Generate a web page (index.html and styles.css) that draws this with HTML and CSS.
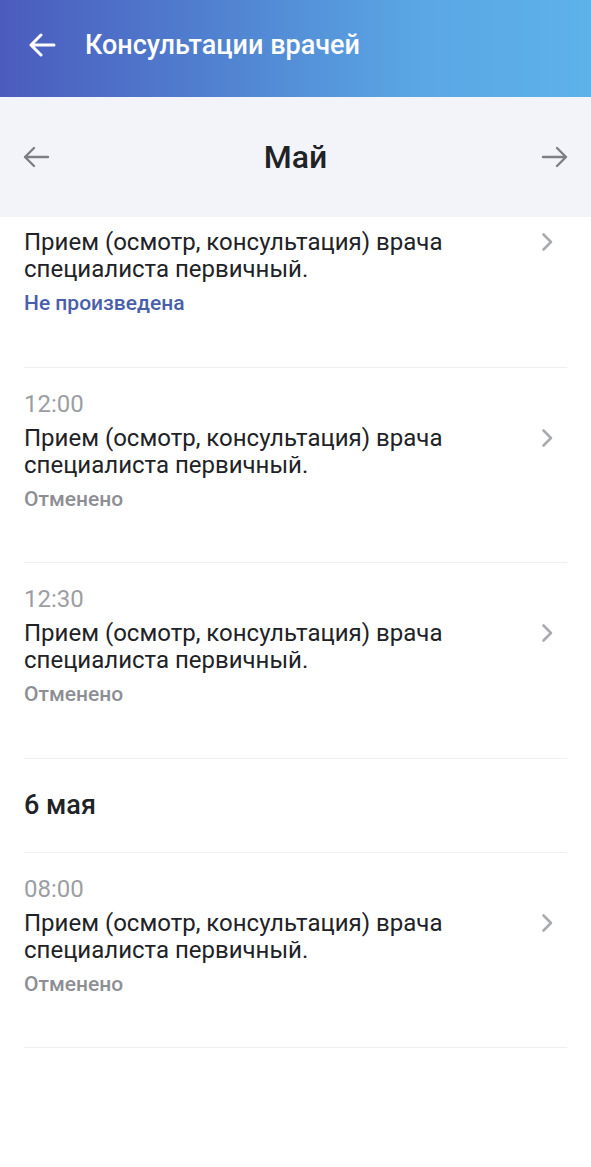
FILE: index.html
```html
<!DOCTYPE html>
<html lang="ru">
<head>
<meta charset="utf-8">
<link rel="stylesheet" href="styles.css">
</head>
<body>
<header class="appbar">
  <svg class="appbar-back" width="28" height="24" viewBox="0 0 28 24"><path d="M26 12H3M13 2L3 12l10 10" fill="none" stroke="#fff" stroke-width="3" stroke-linecap="round" stroke-linejoin="round"/></svg>
  <h1 class="appbar-title">Консультации врачей</h1>
</header>
<nav class="month">
  <svg class="month-arrow" width="28" height="22" viewBox="0 0 28 22"><path d="M26 11H3M12 2L3 11l9 9" fill="none" stroke="#7c7f86" stroke-width="2.4" stroke-linecap="round" stroke-linejoin="round"/></svg>
  <div class="month-name">Май</div>
  <svg class="month-arrow" width="28" height="22" viewBox="0 0 28 22"><path d="M2 11h23M16 2l9 9-9 9" fill="none" stroke="#7c7f86" stroke-width="2.4" stroke-linecap="round" stroke-linejoin="round"/></svg>
</nav>
<main class="list">
  <div class="item item-clipped">
    <div class="item-body">
      <div class="item-title">Прием (осмотр, консультация) врача специалиста первичный.</div>
      <div class="item-status status-blue">Не произведена</div>
    </div>
    <svg class="chev" width="12" height="20" viewBox="0 0 12 20"><path d="M2.5 2.5l7.5 7.5-7.5 7.5" fill="none" stroke="#a9abb0" stroke-width="2.6" stroke-linecap="round" stroke-linejoin="round"/></svg>
  </div>
  <div class="item">
    <div class="item-body">
      <div class="item-time">12:00</div>
      <div class="item-title">Прием (осмотр, консультация) врача специалиста первичный.</div>
      <div class="item-status">Отменено</div>
    </div>
    <svg class="chev" width="12" height="20" viewBox="0 0 12 20"><path d="M2.5 2.5l7.5 7.5-7.5 7.5" fill="none" stroke="#a9abb0" stroke-width="2.6" stroke-linecap="round" stroke-linejoin="round"/></svg>
  </div>
  <div class="item">
    <div class="item-body">
      <div class="item-time">12:30</div>
      <div class="item-title">Прием (осмотр, консультация) врача специалиста первичный.</div>
      <div class="item-status">Отменено</div>
    </div>
    <svg class="chev" width="12" height="20" viewBox="0 0 12 20"><path d="M2.5 2.5l7.5 7.5-7.5 7.5" fill="none" stroke="#a9abb0" stroke-width="2.6" stroke-linecap="round" stroke-linejoin="round"/></svg>
  </div>
  <div class="day">6 мая</div>
  <div class="item">
    <div class="item-body">
      <div class="item-time">08:00</div>
      <div class="item-title">Прием (осмотр, консультация) врача специалиста первичный.</div>
      <div class="item-status">Отменено</div>
    </div>
    <svg class="chev" width="12" height="20" viewBox="0 0 12 20"><path d="M2.5 2.5l7.5 7.5-7.5 7.5" fill="none" stroke="#a9abb0" stroke-width="2.6" stroke-linecap="round" stroke-linejoin="round"/></svg>
  </div>
</main>
</body>
</html>
```

FILE: styles.css
```css
* { box-sizing: border-box; }
html, body { margin: 0; padding: 0; background: #fff; }
body {
  font-family: Roboto, "Noto Sans", "DejaVu Sans", sans-serif;
  color: #212226;
  width: 591px;
}
.appbar {
  height: 97px;
  display: flex;
  align-items: center;
  padding: 0 28px;
  gap: 29px;
  background: linear-gradient(90deg, #4b5bbd 0%, #5185d2 40%, #5aa6e4 70%, #5db2ea 100%);
}
.appbar-back { flex: none; margin-top: -8px; }
.appbar-title {
  margin: 0 0 8px;
  font-size: 27px;
  font-weight: 500;
  color: #fff;
}
.month {
  height: 120px;
  background: #f3f4f9;
  display: flex;
  align-items: center;
  justify-content: space-between;
  padding: 0 22px 0 22px;
}
.month-name {
  font-size: 32px;
  font-weight: 500;
  color: #212226;
}
.list { padding: 0 24px; }
.item {
  display: flex;
  align-items: flex-start;
  justify-content: space-between;
  padding: 22px 0 50.5px;
  border-bottom: 1px solid #eeeff2;
}
.item-clipped { padding-top: 12px; }
.item-body { flex: 1; }
.item-time {
  font-size: 24px;
  line-height: 28px;
  color: #9c9ea3;
  margin-bottom: 7px;
}
.item-title {
  font-size: 24px;
  line-height: 27px;
  color: #212226;
  max-width: 480px;
}
.item-status {
  margin-top: 7px;
  font-size: 21px;
  line-height: 26px;
  font-weight: 500;
  color: #8d8f94;
}
.status-blue { color: #4a5eac; }
.chev { flex: none; margin: 38px 14px 0 0; }
.item-clipped .chev { margin-top: 3px; }
.day {
  height: 94px;
  display: flex;
  align-items: center;
  font-size: 27px;
  font-weight: 500;
  border-bottom: 1px solid #eeeff2;
}
```
